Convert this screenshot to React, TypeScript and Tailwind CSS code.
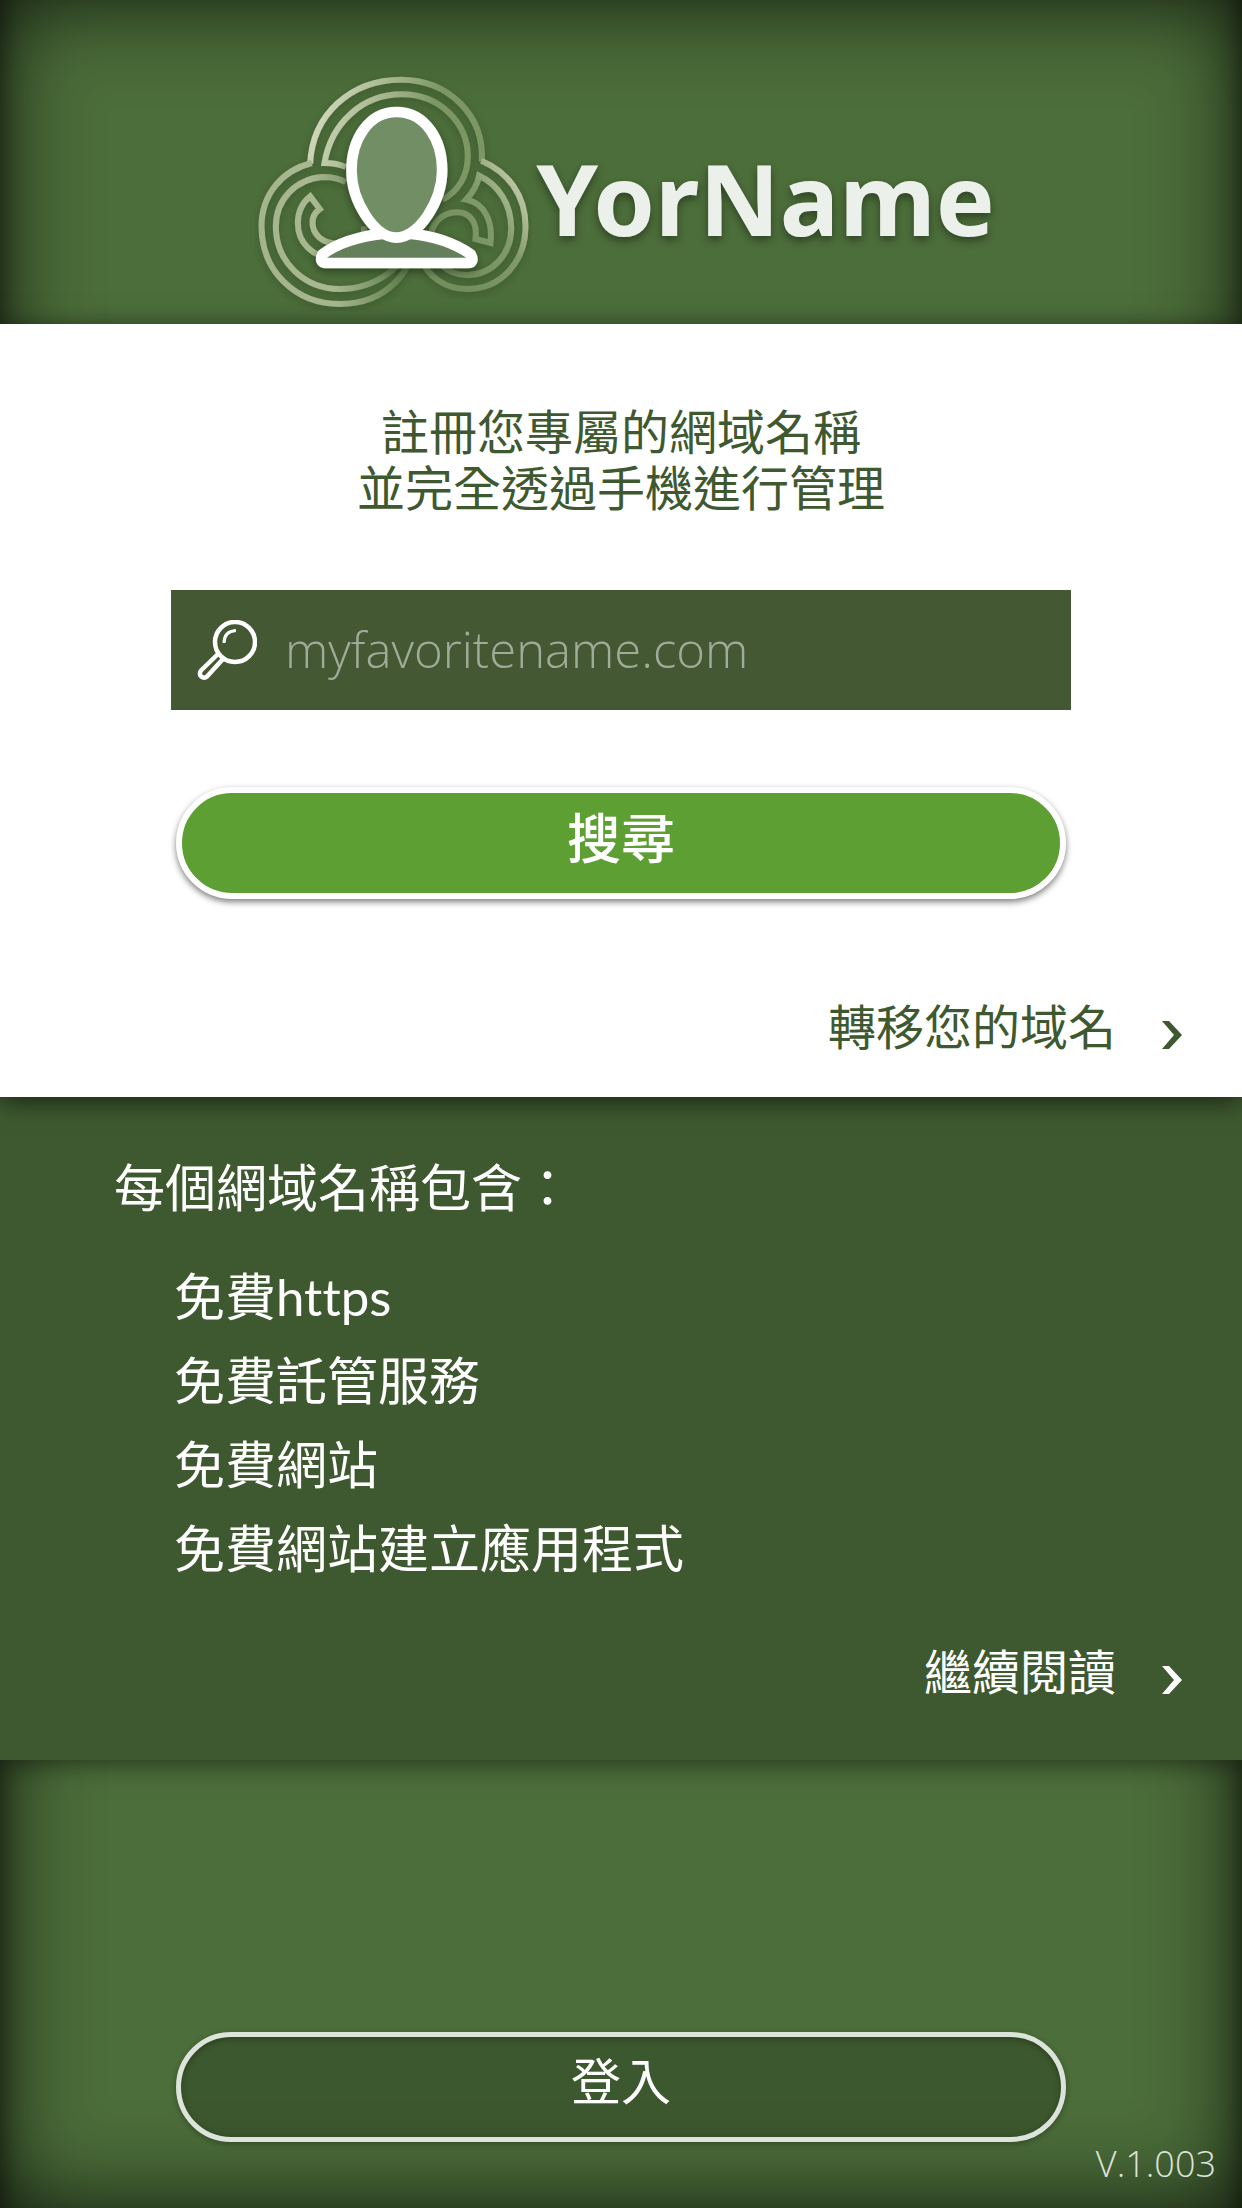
import React, { useState } from "react";

const features = ["免費https", "免費託管服務", "免費網站", "免費網站建立應用程式"];

const LogoMark = () => (
  <svg
    viewBox="50 40 830 714"
    className="w-[277px] h-[238px] shrink-0"
    fill="none"
    aria-hidden="true"
  >
    <defs>
      <linearGradient id="topRing" x1="250" y1="120" x2="740" y2="320" gradientUnits="userSpaceOnUse">
        <stop offset="0" stopColor="#d3d9bd" />
        <stop offset="0.6" stopColor="#7c9764" />
        <stop offset="1" stopColor="#7c9764" />
      </linearGradient>
      <linearGradient id="leftRing" x1="70" y1="640" x2="460" y2="560" gradientUnits="userSpaceOnUse">
        <stop offset="0" stopColor="#a3b48b" />
        <stop offset="0.5" stopColor="#a9b890" />
        <stop offset="1" stopColor="#64824f" />
      </linearGradient>
      <linearGradient id="rightRing" x1="870" y1="400" x2="600" y2="560" gradientUnits="userSpaceOnUse">
        <stop offset="0" stopColor="#c5cdae" />
        <stop offset="0.4" stopColor="#819a69" />
        <stop offset="1" stopColor="#718e5b" />
      </linearGradient>
      <filter id="ringShadow" x="-20%" y="-20%" width="140%" height="150%">
        <feDropShadow dx="0" dy="8" stdDeviation="12" floodColor="#000" floodOpacity="0.2" />
      </filter>
      <filter id="bustShadow" x="-20%" y="-20%" width="140%" height="150%">
        <feDropShadow dx="0" dy="10" stdDeviation="12" floodColor="#000" floodOpacity="0.4" />
      </filter>
    </defs>
    <g strokeWidth="18" filter="url(#ringShadow)">
      <g stroke="url(#topRing)">
        <path d="M215 312C222 165 336 60 488 60C628 60 738 165 730 305" />
        <path d="M322 322C300 312 280 310 258 310C278 190 372 104 490 104C604 104 688 190 688 290C688 350 658 396 612 420" />
      </g>
      <g stroke="url(#leftRing)">
        <path d="M220 310C130 332 69 405 69 500C69 634 170 733 304 733C440 733 532 640 538 500" />
        <path d="M322 368C300 354 276 352 252 352C172 358 112 420 112 500C112 606 196 688 304 688C410 688 500 624 522 530" />
        <path d="M300 552C250 552 222 524 222 488C222 470 230 458 244 448L215 410C190 430 178 458 178 490C178 550 224 594 284 594C340 594 376 556 378 500" />
      </g>
      <g stroke="url(#rightRing)">
        <path d="M728 303C808 336 861 406 861 500C861 606 788 688 685 688C620 688 570 652 545 595" />
        <path d="M722 348C716 376 702 400 683 420C736 430 764 482 756 550L711 538C718 488 694 458 655 458C610 458 576 492 576 540C580 604 626 646 685 646C762 646 818 584 818 506C818 436 782 376 722 348Z" />
      </g>
    </g>
    <g stroke="#fff" strokeWidth="32" strokeLinejoin="round" filter="url(#bustShadow)">
      <path
        d="M436 522C345 532 290 556 252 584C244 600 248 610 262 610H688C702 610 706 600 697 584C655 555 600 530 512 522"
        fill="#64805a"
      />
      <path
        d="M474 157C560 157 611 240 611 332C611 425 540 534 474 534C408 534 339 425 339 332C339 240 390 157 474 157Z"
        fill="#718e65"
      />
    </g>
  </svg>
);

const SearchIcon = () => (
  <svg viewBox="0 0 60 60" className="w-[60px] h-[60px] shrink-0" fill="none" stroke="#fff" aria-hidden="true">
    <ellipse cx="38" cy="22" rx="20" ry="20" strokeWidth="4.5" />
    <path d="M27 23C27 15 31 11 39 10.500" strokeWidth="3" />
    <path d="M21 34L4.500 50C0 55 6 60 10 56.500L26 39" strokeWidth="4.500" strokeLinejoin="round" />
  </svg>
);

const Chevron = () => (
  <svg viewBox="0 0 20 28" className="w-5 h-7 mt-4 shrink-0" fill="currentColor" aria-hidden="true">
    <path d="M0 0H7L20 14L7 28H0L12 14Z" />
  </svg>
);

const MoreLink = ({ label }: { label: string }) => (
  <a href="#" className="flex items-center gap-[46px] text-[48px] leading-[56px]">
    {label}
    <Chevron />
  </a>
);

const App = () => {
  const [domain, setDomain] = useState("");

  return (
    <div className="min-h-screen flex flex-col bg-[#4c6e3a] font-['Lato','Noto_Sans_CJK_TC',sans-serif] [font-variant-ligatures:none] shadow-[inset_0_0_90px_rgba(0,0,0,0.8),inset_24px_0_24px_-24px_rgba(0,0,0,0.5),inset_-24px_0_24px_-24px_rgba(0,0,0,0.5)]">
      <header className="h-[324px] pt-[60px] pl-2 flex items-center justify-center gap-1">
        <LogoMark />
        <span className="pt-3 font-['Noto_Sans',sans-serif] text-[99px] leading-[140px] font-bold text-[#ecf0eb] [text-shadow:0_4px_8px_rgba(0,0,0,0.4)]">
          YorName
        </span>
      </header>

      <main>
        <section className="relative z-10 bg-white text-[#3e592f] pt-20 pb-[42px] shadow-[0_4px_24px_rgba(0,0,0,0.6)]">
          <h1 className="text-center text-[48px] leading-[56px]">
            註冊您專屬的網域名稱
            <br />
            並完全透過手機進行管理
          </h1>
          <form
            className="mt-[74px] mx-auto max-w-[900px] flex flex-col items-center"
            onSubmit={(e) => e.preventDefault()}
          >
            <label className="w-full h-[120px] px-[26px] flex items-center gap-7 bg-[#445833]">
              <SearchIcon />
              <input
                type="text"
                aria-label="myfavoritename.com"
                placeholder="myfavoritename.com"
                value={domain}
                onChange={(e) => setDomain(e.target.value)}
                className="flex-1 min-w-0 bg-transparent outline-none text-white font-['Open_Sans','Noto_Sans_CJK_TC',sans-serif] text-[49px] font-light placeholder:text-[#a1ab99]"
              />
            </label>
            <button
              type="submit"
              className="mt-[77px] w-full max-w-[890px] h-[112px] pb-2 rounded-full border-6 border-white bg-[#5d9f32] text-white text-[54px] leading-[80px] font-medium shadow-[0_3px_6px_rgba(0,0,0,0.5)]"
            >
              搜尋
            </button>
          </form>
          <div className="mt-[100px] pr-[60px] flex justify-end">
            <MoreLink label="轉移您的域名" />
          </div>
        </section>

        <section className="bg-[#3e592f] text-white pt-[49px] pb-[60px] shadow-[0_4px_24px_rgba(0,0,0,0.5)]">
          <h2 className="pl-[114px] text-[51px] leading-[84px]">每個網域名稱包含：</h2>
          <ul className="mt-[25px] pl-[174px] text-[51px] leading-[84px]">
            {features.map((feature) => (
              <li key={feature}>{feature}</li>
            ))}
          </ul>
          <div className="mt-[53px] pr-[60px] flex justify-end">
            <MoreLink label="繼續閱讀" />
          </div>
        </section>
      </main>

      <footer className="flex-1 flex flex-col items-center justify-end pb-6">
        <button
          type="button"
          className="w-full max-w-[890px] h-[110px] pb-3 rounded-full border-5 border-[#dce3da] bg-black/20 text-white text-[50px] leading-[80px] shadow-[0_2px_6px_rgba(0,0,0,0.3),inset_0_2px_6px_rgba(0,0,0,0.3)]"
        >
          登入
        </button>
        <p className="self-end mt-0.5 pr-[26px] font-['Open_Sans',sans-serif] text-[36px] leading-[40px] font-light text-[#dce3da]">
          V.1.003
        </p>
      </footer>
    </div>
  );
};

export default App;
